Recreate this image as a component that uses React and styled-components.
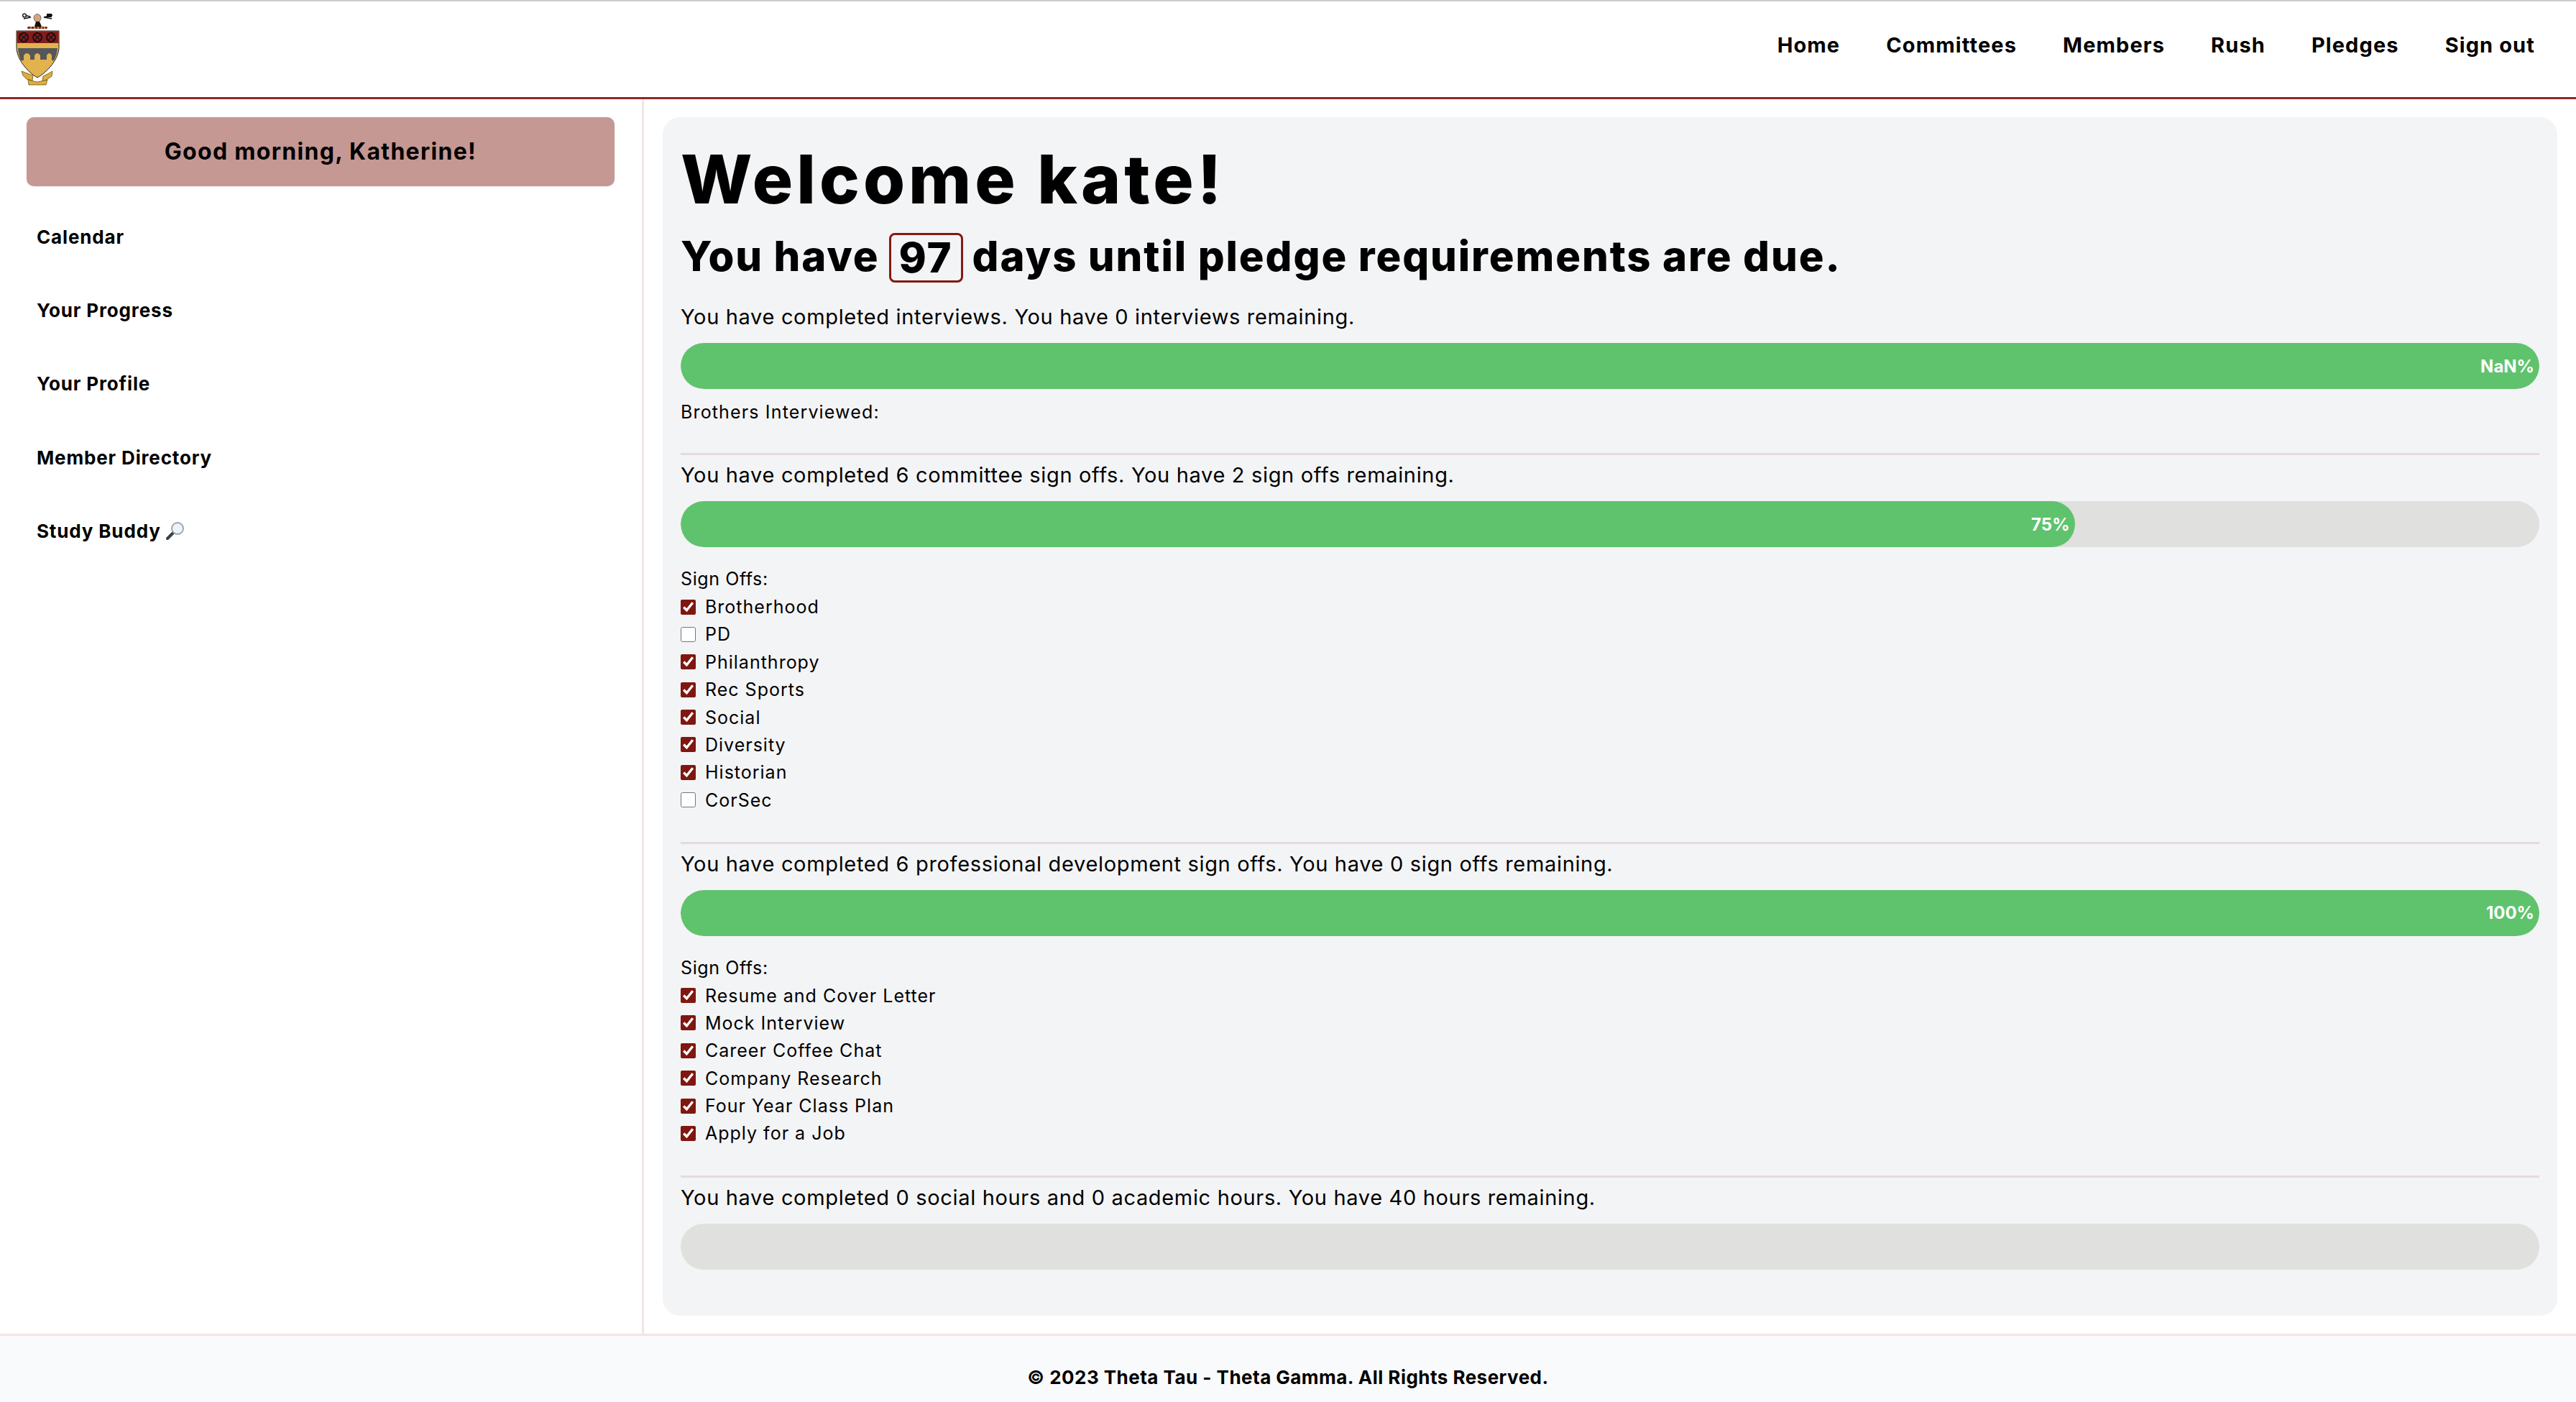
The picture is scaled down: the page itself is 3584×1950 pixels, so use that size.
import React from "react";
import styled, { createGlobalStyle } from "styled-components";

const Global = createGlobalStyle`
  html, body { margin: 0; padding: 0; background: #fff; }
  * { box-sizing: border-box; }
  body { font-family: Inter, "Liberation Sans", sans-serif; color: #000; }
`;
const Page = styled.div`display: flex; flex-direction: column; height: 1950px; overflow: hidden;`;
const Header = styled.header`
  height: 138px; flex: none; display: flex; align-items: center; justify-content: space-between;
  border-top: 2px solid #cccccc; border-bottom: 3px solid #8f2826; padding: 0 57px 12px 21px; background: #fff;
`;
const LogoWrap = styled.div`display: flex; margin-top: 12px;`;
const NavList = styled.nav`display: flex; gap: 64px;`;
const NavLink = styled.a`font-size: 29px; font-weight: 700; line-height: 40px; letter-spacing: 1.1px;`;
const Body = styled.div`flex: 1; display: flex; min-height: 0;`;
const Sidebar = styled.aside`width: 896px; flex: none; border-right: 3px solid #f3e4e4; padding: 25px 38px 0 37px;`;
const Greeting = styled.div`
  height: 96px; display: flex; align-items: center; justify-content: center; background: #c59893;
  border-radius: 10px; font-size: 32px; font-weight: 700; letter-spacing: 1.3px; margin-bottom: 19px;
  padding-bottom: 2px; box-shadow: 0 1px 2px rgba(0,0,0,.08);
`;
const SideItem = styled.a`
  display: flex; align-items: center; gap: 7px; height: 102.4px; padding-left: 14px;
  font-size: 26px; font-weight: 700; letter-spacing: 0.85px;
`;
const Card = styled.main`
  flex: 1; margin: 25px 26px; background: #f3f4f6; border-radius: 24px; padding: 38px 25px 64px;
`;
const Title = styled.h1`margin: 0; font-size: 94px; line-height: 96px; font-weight: 800; letter-spacing: 5px;`;
const Subtitle = styled.h2`
  margin: 27px 0 0; font-size: 58px; line-height: 65px; height: 69px; font-weight: 800; letter-spacing: 1.9px;
  display: flex; align-items: flex-start; gap: 13px;
`;
const DayBox = styled.span`
  display: inline-flex; align-items: center; justify-content: center; width: 103px; height: 69px;
  border: 3px solid #841a10; border-radius: 8px;
`;
const Para = styled.p`margin: ${p => p.$top ?? 8}px 0 16px; font-size: 29px; line-height: 40px; font-weight: 400; letter-spacing: 0.66px;`;
const Track = styled.div`height: 64px; border-radius: 32px; background: #e0e0de; overflow: hidden;`;
const Fill = styled.div`
  height: 100%; background: #5fc36d; border-radius: 32px; display: flex; align-items: center; justify-content: flex-end;
  padding-right: 7px; color: #fff; font-size: 24px; font-weight: 700;
`;
const Divider = styled.hr`margin: ${p => p.$top}px 0 0; border: 0; height: 3px; background: #e8dada;`;
const Label = styled.div`margin-top: ${p => p.$top}px; font-size: 25px; line-height: 38.4px; letter-spacing: ${p => p.$spacing ?? 0.6}px;`;
const Row = styled.label`display: flex; align-items: center; gap: 13px; height: 38.4px; font-size: 25px; letter-spacing: 1px;`;
const Box = styled.input`width: 21px; height: 21px; margin: 0; accent-color: #7f1710; flex: none;`;
const Footer = styled.footer`
  height: 95px; flex: none; border-top: 3px solid #f3e4e4; background: #f9fafb; text-align: center;
  padding-top: 38px; font-size: 26px; line-height: 40px; font-weight: 700; letter-spacing: 0.47px;
`;

const Crest = () => (
  <svg width="64" height="104" viewBox="21 16 64 104">
    <path d="M32 20 l10 2 M33 25 l10-2 M73 20 l-12 3 M72 25 l-11-2" stroke="#111" strokeWidth="1.6" fill="none" />
    <circle cx="34" cy="20.5" r="2.4" fill="#fff" stroke="#111" strokeWidth="1.4" />
    <rect x="65" y="18" width="7" height="5" fill="#111" />
    <ellipse cx="52" cy="24" rx="5" ry="5.5" fill="#d9a27e" stroke="#333" strokeWidth=".6" />
    <path d="M48 36 L50 29 H55 L58 36 Z" fill="#111" />
    <rect x="38" y="36" width="28" height="3" rx="1.5" fill="#8b1e1a" />
    <path d="M43 36v3M48 36v3M53 36v3M58 36v3M62 36v3" stroke="#e0b14a" strokeWidth="1.4" />
    <path d="M23 42 H82 V66 C81 82 66 99 52 107 C38 99 24 82 23 66 Z" fill="#e2b34c" stroke="#222" strokeWidth="1" />
    <path d="M23.5 42.5 H81.5 V59 H23.5 Z" fill="#841c1c" />
    <path d="M25 66 H80 C79.5 72 78 78 75 83 H72 V76 Q68.500 70 65 76 V82 H56 V76 Q52 70 48 76 V82 H42 V76 Q37.500 70 33 76 V83 H29 C27 78 25.500 72 25 66 Z" fill="#55565a" />
    {[33, 52, 71].map(x => (
      <g key={x} fill="none" stroke="#111">
        <circle cx={x} cy="51" r="6" strokeWidth="1.8" />
        <path d={`M${x - 4} ${51 - 4}L${x + 4} ${51 + 4}M${x + 4} ${51 - 4}L${x - 4} ${51 + 4}`} strokeWidth="1.2" />
      </g>
    ))}
    <g fill="#dcae3f" stroke="#6b5312" strokeWidth=".8">
      <path d="M30 98 L38 101 L46 104 L45 111 L37 109 L32 104 Z" />
      <path d="M73 98 L72 105 L65 110 L59 112 L60 105 L66 102 Z" />
      <path d="M39 110 L52 113 L66 110 L64 117 L40 117 Z" />
    </g>
  </svg>
);

const Lens = () => (
  <svg width="26" height="28" viewBox="0 0 26 28">
    <path d="M2 24 L10 16" stroke="#3b3f46" strokeWidth="4" strokeLinecap="round" />
    <circle cx="16" cy="10" r="8" fill="#eef3f8" stroke="#9aa3ad" strokeWidth="1.8" />
  </svg>
);

const Check = ({ name, on }) => (
  <Row><Box type="checkbox" checked={on} readOnly />{name}</Row>
);

const committees = [["Brotherhood", 1], ["PD", 0], ["Philanthropy", 1], ["Rec Sports", 1], ["Social", 1], ["Diversity", 1], ["Historian", 1], ["CorSec", 0]];
const pd = ["Resume and Cover Letter", "Mock Interview", "Career Coffee Chat", "Company Research", "Four Year Class Plan", "Apply for a Job"];

export default function App() {
  return (
    <Page>
      <Global />
      <Header>
        <LogoWrap><Crest /></LogoWrap>
        <NavList>
          {["Home", "Committees", "Members", "Rush", "Pledges", "Sign out"].map(n => <NavLink key={n}>{n}</NavLink>)}
        </NavList>
      </Header>
      <Body>
        <Sidebar>
          <Greeting>Good morning, Katherine!</Greeting>
          <SideItem>Calendar</SideItem>
          <SideItem>Your Progress</SideItem>
          <SideItem>Your Profile</SideItem>
          <SideItem>Member Directory</SideItem>
          <SideItem>Study Buddy <Lens /></SideItem>
        </Sidebar>
        <Card>
          <Title>Welcome kate!</Title>
          <Subtitle>You have <DayBox>97</DayBox> days until pledge requirements are due.</Subtitle>
          <Para $top={28}>You have completed interviews. You have 0 interviews remaining.</Para>
          <Track><Fill style={{ width: "100%" }}>NaN%</Fill></Track>
          <Label $top={13} $spacing={1.15}>Brothers Interviewed:</Label>
          <Divider $top={38} />
          <Para>You have completed 6 committee sign offs. You have 2 sign offs remaining.</Para>
          <Track><Fill style={{ width: "75%" }}>75%</Fill></Track>
          <Label $top={25}>Sign Offs:</Label>
          {committees.map(([n, on]) => <Check key={n} name={n} on={!!on} />)}
          <Divider $top={39} />
          <Para>You have completed 6 professional development sign offs. You have 0 sign offs remaining.</Para>
          <Track><Fill style={{ width: "100%" }}>100%</Fill></Track>
          <Label $top={25}>Sign Offs:</Label>
          {pd.map(n => <Check key={n} name={n} on />)}
          <Divider $top={39} />
          <Para>You have completed 0 social hours and 0 academic hours. You have 40 hours remaining.</Para>
          <Track />
        </Card>
      </Body>
      <Footer>© 2023 Theta Tau - Theta Gamma. All Rights Reserved.</Footer>
    </Page>
  );
}
